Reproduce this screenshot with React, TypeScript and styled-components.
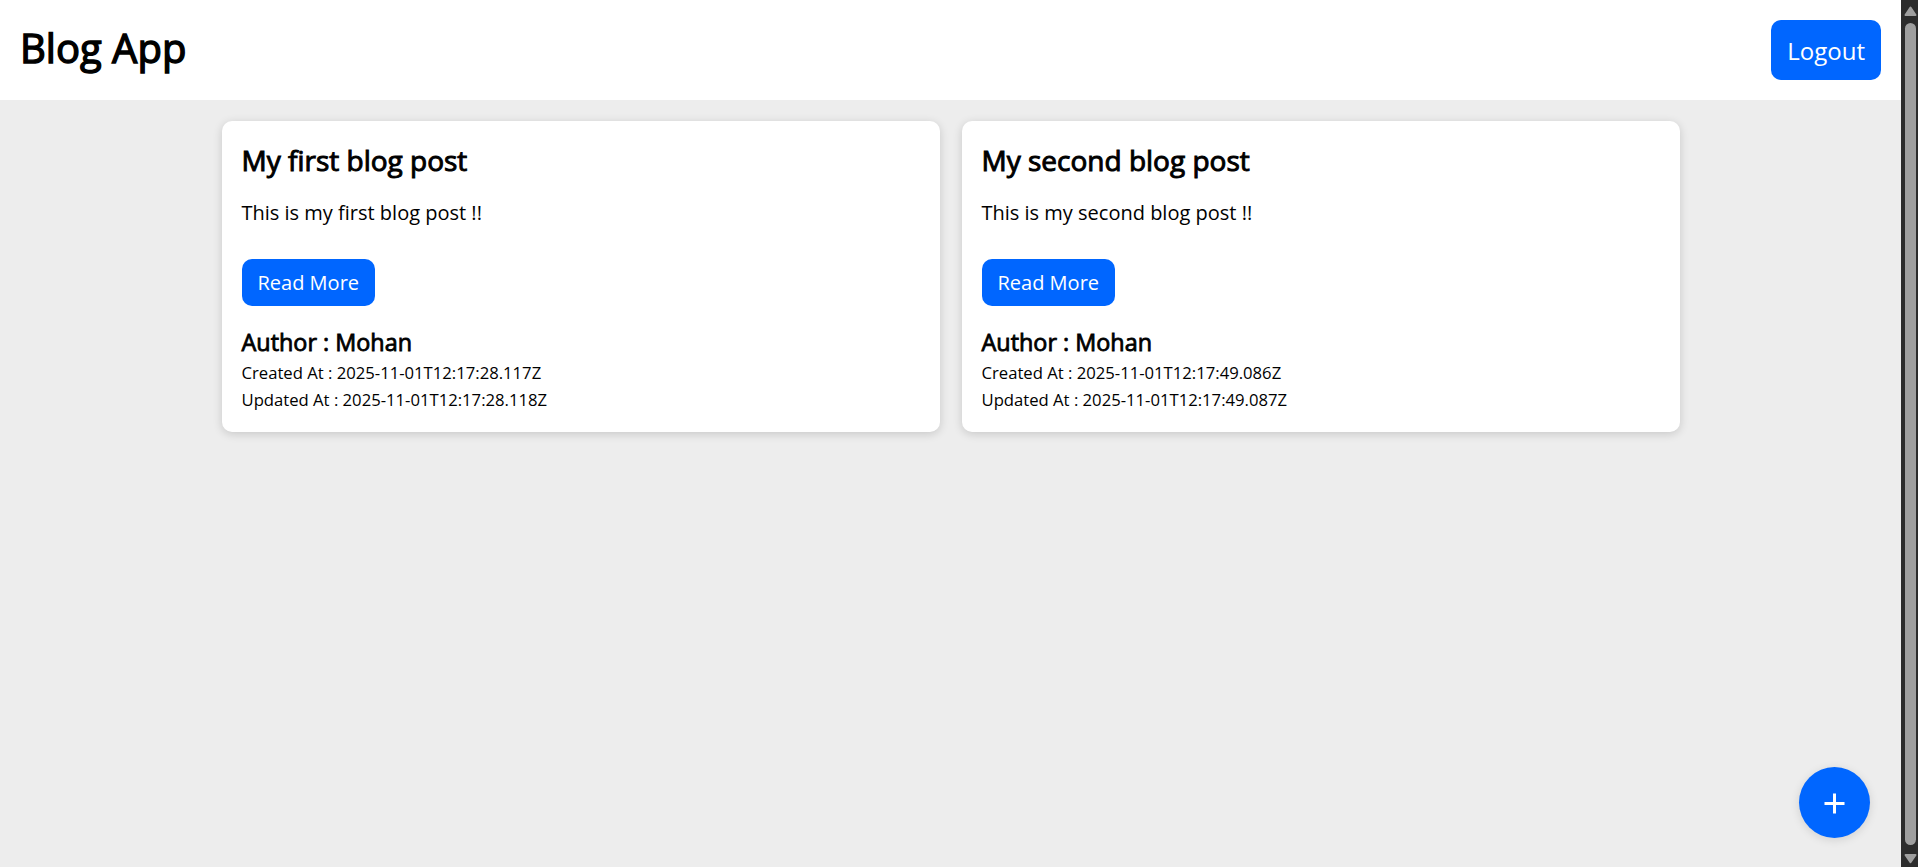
import React from 'react';
import styled, { createGlobalStyle } from 'styled-components';

const GlobalStyle = createGlobalStyle`
  * { box-sizing: border-box; margin: 0; padding: 0; }
  body { font-family: 'Open Sans', sans-serif; color: #000; background: #ededed; overflow: hidden; }
`;

const Screen = styled.div`
  display: flex;
  height: 100vh;
`;

const Page = styled.div`
  flex: 1;
  min-width: 0;
  background: #ededed;
`;

const Header = styled.header`
  display: flex;
  align-items: center;
  justify-content: space-between;
  height: 100px;
  padding: 0 20px;
  background: #fff;
`;

const Heading = styled.h1<{ $size: number; $line: number }>`
  font-size: ${(p) => p.$size}px;
  line-height: ${(p) => p.$line}px;
  font-weight: 400;
  -webkit-text-stroke: ${(p) => (p.$size / 29).toFixed(2)}px #000;
`;

const Brand = styled(Heading)`
  margin-bottom: 4px;
`;

const Button = styled.button<{ $large?: boolean }>`
  display: block;
  height: ${(p) => (p.$large ? 60 : 47)}px;
  padding: 0 16px;
  border: 0;
  border-radius: 10px;
  background: #06f;
  color: #fff;
  font-family: inherit;
  font-size: ${(p) => (p.$large ? 24 : 20)}px;
  cursor: pointer;
`;

const Posts = styled.main`
  display: grid;
  grid-template-columns: 718px 718px;
  gap: 22px;
  justify-content: center;
  padding-top: 21px;
`;

const Card = styled.article`
  height: 311px;
  padding: 20px;
  border-radius: 10px;
  background: #fff;
  box-shadow: 0 2px 10px rgba(0, 0, 0, 0.16);
`;

const Body = styled.p`
  margin: 19px 0 31px;
  font-size: 20px;
  line-height: 30px;
`;

const Meta = styled.footer`
  margin-top: 19px;
`;

const Stamp = styled.p`
  font-size: 16.667px;
  line-height: 27px;
`;

const AddButton = styled.button`
  position: fixed;
  right: 48px;
  bottom: 29px;
  display: grid;
  place-items: center;
  width: 71px;
  height: 71px;
  padding-top: 2px;
  border: 0;
  border-radius: 50%;
  background: #06f;
  box-shadow: 0 2px 10px rgba(0, 0, 0, 0.12);
`;

const Scrollbar = styled.div`
  display: flex;
  flex-direction: column;
  align-items: center;
  width: 17px;
  padding: 6px 0 3px 2px;
  background: #2c2c2c;
`;

const Thumb = styled.div`
  flex: 1;
  width: 11px;
  margin: 7px 0 9px;
  border-radius: 6px;
  background: #9f9f9f;
`;

const Arrow = ({ down }: { down?: boolean }) => (
  <svg width="13" height="10" viewBox="0 0 13 10">
    <path
      d={down ? 'M1.5 1h10L6.5 8.3z' : 'M1.5 9h10L6.5 1.5z'}
      fill="#9f9f9f"
      stroke="#9f9f9f"
      strokeWidth="2"
      strokeLinejoin="round"
    />
  </svg>
);

const posts = [
  {
    title: 'My first blog post',
    body: 'This is my first blog post !!',
    author: 'Mohan',
    created: '2025-11-01T12:17:28.117Z',
    updated: '2025-11-01T12:17:28.118Z',
  },
  {
    title: 'My second blog post',
    body: 'This is my second blog post !!',
    author: 'Mohan',
    created: '2025-11-01T12:17:49.086Z',
    updated: '2025-11-01T12:17:49.087Z',
  },
];

export default function App() {
  return (
    <Screen>
      <GlobalStyle />
      <Page>
        <Header>
          <Brand $size={40} $line={60}>Blog App</Brand>
          <Button $large>Logout</Button>
        </Header>
        <Posts>
          {posts.map((post) => (
            <Card key={post.title}>
              <Heading as="h2" $size={28} $line={38}>{post.title}</Heading>
              <Body>{post.body}</Body>
              <Button>Read More</Button>
              <Meta>
                <Heading as="h3" $size={23.4} $line={34}>{`Author : ${post.author}`}</Heading>
                <Stamp>{`Created At : ${post.created}`}</Stamp>
                <Stamp>{`Updated At : ${post.updated}`}</Stamp>
              </Meta>
            </Card>
          ))}
        </Posts>
        <AddButton aria-label="Add post">
          <svg width="21" height="21" viewBox="0 0 21 21">
            <path d="M10.5 0.5v20M0.5 10.5h20" stroke="#fff" strokeWidth="3" />
          </svg>
        </AddButton>
      </Page>
      <Scrollbar>
        <Arrow />
        <Thumb />
        <Arrow down />
      </Scrollbar>
    </Screen>
  );
}
